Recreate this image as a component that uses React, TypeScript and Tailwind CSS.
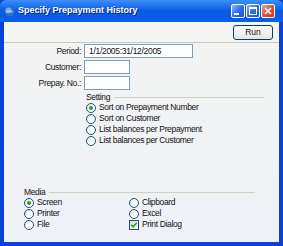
import React from "react";

const font = { fontFamily: '"Liberation Sans", Arial, sans-serif' };

function Radio({ label, checked }: { label: string; checked?: boolean }) {
  return (
    <div className="flex items-center h-[11px] gap-[3px]">
      <span className="w-[10px] h-[10px] rounded-full border border-[#1c5180] bg-gradient-to-br from-[#dcdcd5] via-white to-white flex items-center justify-center shrink-0">
        {checked && <span className="w-[4px] h-[4px] rounded-full bg-[#21a121]" />}
      </span>
      <span className="text-[8.5px] tracking-[-0.35px] leading-none text-[#111] whitespace-nowrap">{label}</span>
    </div>
  );
}

function Check({ label, checked }: { label: string; checked?: boolean }) {
  return (
    <div className="flex items-center h-[11px] gap-[3px]">
      <span className="w-[10px] h-[10px] border border-[#1c5180] bg-gradient-to-br from-[#dcdcd5] to-white flex items-center justify-center shrink-0">
        {checked && (
          <svg width="8" height="8" viewBox="0 0 8 8">
            <path d="M1.2 3.8 L3.2 5.8 L6.8 1.8" stroke="#21a121" strokeWidth="1.6" fill="none" />
          </svg>
        )}
      </span>
      <span className="text-[8.5px] tracking-[-0.35px] leading-none text-[#111] whitespace-nowrap">{label}</span>
    </div>
  );
}

function GroupHead({ title, lineClass }: { title: string; lineClass: string }) {
  return (
    <div className="flex items-center h-[10px] gap-[4px]">
      <span className="text-[8.5px] tracking-[-0.35px] leading-none text-[#111]">{title}</span>
      <span className={"h-[1px] bg-[#d0d0bf] " + lineClass} />
    </div>
  );
}

function Field({ label, inputClass, value }: { label: string; inputClass: string; value?: string }) {
  return (
    <div className="flex items-center gap-[3px]">
      <span className="w-[77px] text-right text-[8.5px] tracking-[-0.35px] leading-none text-[#111]">{label}</span>
      <div className={"h-[14px] border border-[#7f9db9] bg-white flex items-center px-[4px] text-[8.5px] tracking-[-0.3px] text-[#111] " + inputClass}>
        {value}
      </div>
    </div>
  );
}

function TitleButton({ kind }: { kind: "min" | "max" | "close" }) {
  const bg =
    kind === "close"
      ? "bg-gradient-to-br from-[#f0a08a] via-[#e2532f] to-[#c43a1a]"
      : "bg-gradient-to-br from-[#8fb6fb] via-[#2d6cf2] to-[#1c55e0]";
  return (
    <div className={"w-[14px] h-[14px] rounded-[2px] border border-white flex items-center justify-center " + bg}>
      {kind === "min" && <span className="w-[5px] h-[2px] bg-white mt-[6px] -ml-[3px]" />}
      {kind === "max" && <span className="w-[8px] h-[8px] border border-white border-t-2" />}
      {kind === "close" && (
        <svg width="8" height="8" viewBox="0 0 8 8">
          <path d="M1 1 L7 7 M7 1 L1 7" stroke="white" strokeWidth="1.6" />
        </svg>
      )}
    </div>
  );
}

export default function App() {
  return (
    <div className="w-[283px] h-[246px] flex flex-col bg-[#0842d6]" style={font}>
      {/* title bar */}
      <div className="h-[22px] flex items-center pl-[4px] pr-[8px] rounded-t-[6px] bg-gradient-to-b from-[#3d8ff7] via-[#0958e6] to-[#0a5fe9]">
        <svg width="11" height="11" viewBox="0 0 11 11" className="shrink-0">
          <circle cx="5.5" cy="5.5" r="5" fill="#2f6fc7" />
          <circle cx="4.5" cy="4.5" r="3" fill="#8fc4f0" opacity="0.7" />
          <path d="M2 6 Q5 4 9 6" stroke="#d9ecff" strokeWidth="0.8" fill="none" />
        </svg>
        <span className="ml-[3px] text-[9px] font-bold text-white [text-shadow:1px_1px_0_#0a1e7a] whitespace-nowrap">
          Specify Prepayment History
        </span>
        <div className="ml-auto flex gap-[1px]">
          <TitleButton kind="min" />
          <TitleButton kind="max" />
          <TitleButton kind="close" />
        </div>
      </div>

      {/* body */}
      <div className="flex-1 mx-[4px] mb-[4px] flex flex-col bg-gradient-to-b from-[#f4f4f3] to-[#eef1f6]">
        <div className="h-[21px] flex justify-end items-start pt-[3px] pr-[6px] border-b border-[#c9c9c0] bg-[#f5f5f4]">
          <div className="w-[40px] h-[15px] rounded-[3px] border border-[#003c74] bg-gradient-to-b from-white to-[#e6e5df] flex items-center justify-center text-[8.5px] text-[#111]">
            Run
          </div>
        </div>

        <div className="flex flex-col gap-[2px] mt-[1px]">
          <Field label="Period:" inputClass="w-[109px]" value="1/1/2005:31/12/2005" />
          <Field label="Customer:" inputClass="w-[46px]" />
          <Field label="Prepay. No.:" inputClass="w-[46px]" />
        </div>

        <div className="ml-[82px] mt-[2px] flex flex-col">
          <GroupHead title="Setting" lineClass="w-[150px]" />
          <Radio label="Sort on Prepayment Number" checked />
          <Radio label="Sort on Customer" />
          <Radio label="List balances per Prepayment" />
          <Radio label="List balances per Customer" />
        </div>

        <div className="ml-[20px] mt-[41px] flex flex-col">
          <GroupHead title="Media" lineClass="w-[206px]" />
          <div className="grid grid-cols-[105px_1fr]">
            <Radio label="Screen" checked />
            <Radio label="Clipboard" />
            <Radio label="Printer" />
            <Radio label="Excel" />
            <Radio label="File" />
            <Check label="Print Dialog" checked />
          </div>
        </div>
      </div>
    </div>
  );
}
